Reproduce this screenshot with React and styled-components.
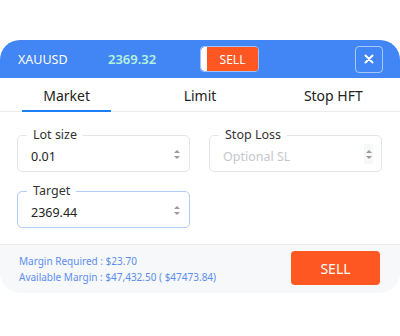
import React, { useState } from 'react';
import styled, { createGlobalStyle } from 'styled-components';

const GlobalStyle = createGlobalStyle`
  html, body {
    margin: 0;
    padding: 0;
    background: #ffffff;
    font-family: "Noto Sans", "Open Sans", sans-serif;
  }
`;

const Page = styled.div`
  width: 400px;
  height: 336px;
  padding-top: 40px;
  box-sizing: border-box;
`;

const Card = styled.div`
  width: 400px;
  height: 253px;
  border-radius: 20px;
  overflow: hidden;
  background: #ffffff;
  display: flex;
  flex-direction: column;
`;

const Header = styled.div`
  height: 38px;
  background: #4285f4;
  display: flex;
  align-items: center;
  padding: 0 17px 0 18px;
  box-sizing: border-box;
`;

const Symbol = styled.span`
  color: #ffffff;
  font-size: 12.5px;
  width: 90px;
`;

const Price = styled.span`
  color: #b4f3dd;
  font-size: 13px;
  font-weight: 600;
  width: 92px;
`;

const Toggle = styled.div`
  display: flex;
  height: 26px;
  border: 1px solid rgba(255, 255, 255, 0.5);
  border-radius: 4px;
  overflow: hidden;
  box-sizing: border-box;
`;

const ToggleSide = styled.div`
  width: 6px;
  background: #ffffff;
  border-radius: 4px 0 0 4px;
`;

const ToggleSell = styled.button`
  width: 51px;
  border: none;
  background: #ff5722;
  color: #ffffff;
  font-family: inherit;
  font-size: 12px;
  padding: 0;
  cursor: pointer;
`;

const CloseButton = styled.button`
  margin-left: auto;
  width: 28px;
  height: 27px;
  border: 1px solid rgba(255, 255, 255, 0.55);
  border-radius: 4px;
  background: transparent;
  display: flex;
  align-items: center;
  justify-content: center;
  padding: 0;
`;

const Tabs = styled.div`
  display: grid;
  grid-template-columns: repeat(3, 1fr);
  height: 34px;
  border-bottom: 1px solid #ececec;
  box-sizing: border-box;
`;

const Tab = styled.div`
  position: relative;
  display: flex;
  align-items: center;
  justify-content: center;
  font-size: 14px;
  color: #222;
  padding-top: 1px;
  cursor: pointer;

  &::after {
    content: '';
    display: ${(p) => (p.$active ? 'block' : 'none')};
    position: absolute;
    left: 22px;
    right: 22px;
    bottom: -1px;
    height: 2px;
    background: #1a7ef5;
  }
`;

const Form = styled.div`
  display: grid;
  grid-template-columns: 173px 173px;
  align-content: start;
  column-gap: 19px;
  row-gap: 19px;
  padding: 23px 18px 0 17px;
  height: 132px;
  box-sizing: border-box;
`;

const Field = styled.div`
  position: relative;
  height: 37px;
  border: 1px solid ${(p) => (p.$focus ? '#b0cdf8' : '#e3e5e8')};
  border-radius: 5px;
  box-sizing: border-box;
  display: flex;
  align-items: center;
  padding: 6px 8px 0 13px;
`;

const Label = styled.span`
  position: absolute;
  top: -10px;
  left: 9px;
  padding: 0 6px;
  background: #ffffff;
  font-size: 12.5px;
  color: #333;
  line-height: 18px;
`;

const Value = styled.span`
  flex: 1;
  font-size: 12.5px;
  color: ${(p) => (p.$placeholder ? '#c3c7cd' : '#222')};
`;

const Spinner = styled.div`
  display: flex;
  flex-direction: column;
  align-items: center;
  justify-content: center;
  gap: 3px;
  width: 9px;
  height: 20px;
  margin-top: -5px;
  background: ${(p) => (p.$shade ? '#f6f7f8' : 'transparent')};
`;

const Arrow = styled.span`
  width: 0;
  height: 0;
  border-left: 3px solid transparent;
  border-right: 3px solid transparent;
  ${(p) => (p.$down ? 'border-top: 3px solid #9a9a9a;' : 'border-bottom: 3px solid #9a9a9a;')}
`;

const Footer = styled.div`
  flex: 1;
  background: #f7f8fa;
  border-top: 1px solid #ececec;
  display: flex;
  align-items: center;
  padding: 0 20px 0 19px;
`;

const MarginInfo = styled.div`
  flex: 1;
  display: flex;
  flex-direction: column;
  gap: 1px;
  font-size: 10px;
  color: #5b8ef0;
  line-height: 15px;
  padding-top: 1px;
`;

const SellButton = styled.button`
  width: 89px;
  height: 34px;
  border: none;
  border-radius: 4px;
  background: #ff5722;
  color: #ffffff;
  font-family: inherit;
  font-size: 14px;
  cursor: pointer;
  margin-top: -2px;
`;

function NumberField({ label, value, placeholder, focus, shade }) {
  return (
    <Field $focus={focus}>
      <Label>{label}</Label>
      <Value $placeholder={!value}>{value || placeholder}</Value>
      <Spinner $shade={shade}>
        <Arrow />
        <Arrow $down />
      </Spinner>
    </Field>
  );
}

export default function App() {
  const [tab, setTab] = useState('Market');
  const tabs = ['Market', 'Limit', 'Stop HFT'];

  return (
    <Page>
      <GlobalStyle />
      <Card>
        <Header>
          <Symbol>XAUUSD</Symbol>
          <Price>2369.32</Price>
          <Toggle>
            <ToggleSide />
            <ToggleSell>SELL</ToggleSell>
          </Toggle>
          <CloseButton>
            <svg width="10" height="10" viewBox="0 0 10 10">
              <path d="M1.5 1.5 L8.5 8.5 M8.5 1.5 L1.5 8.5" stroke="#fff" strokeWidth="2" strokeLinecap="round" />
            </svg>
          </CloseButton>
        </Header>
        <Tabs>
          {tabs.map((t) => (
            <Tab key={t} $active={t === tab} onClick={() => setTab(t)}>
              {t}
            </Tab>
          ))}
        </Tabs>
        <Form>
          <NumberField label="Lot size" value="0.01" />
          <NumberField label="Stop Loss" placeholder="Optional SL" shade />
          <NumberField label="Target" value="2369.44" focus />
        </Form>
        <Footer>
          <MarginInfo>
            <span>Margin Required : $23.70</span>
            <span>Available Margin : $47,432.50 ( $47473.84)</span>
          </MarginInfo>
          <SellButton>SELL</SellButton>
        </Footer>
      </Card>
    </Page>
  );
}
